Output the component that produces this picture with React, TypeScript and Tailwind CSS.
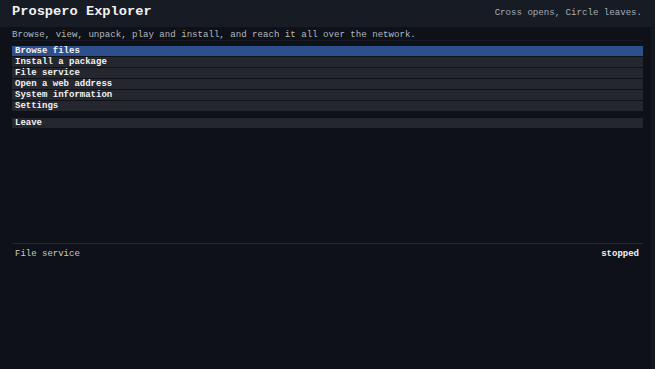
import React from 'react';

const items = [
  'Browse files',
  'Install a package',
  'File service',
  'Open a web address',
  'System information',
  'Settings',
];

function Row({ label, active }: { label: string; active?: boolean }) {
  return (
    <div
      className={`h-[10px] px-[3px] text-[9px] leading-[10px] font-bold text-[#f2f2f2] ${
        active ? 'bg-[#2e4f8e]' : 'bg-[#25272f]'
      }`}
    >
      {label}
    </div>
  );
}

export default function App() {
  return (
    <div
      className="flex flex-col h-screen w-full bg-[#0e1117] overflow-hidden"
      style={{ fontFamily: '"Liberation Mono", "DejaVu Sans Mono", monospace' }}
    >
      {/* header */}
      <header className="flex items-center justify-between h-[27px] pl-3 pr-[13px] bg-[#161b24] flex-shrink-0">
        <h1 className="text-[13.7px] font-bold text-[#f2f2f2] leading-none pb-[3px]">Prospero Explorer</h1>
        <span className="text-[9.1px] text-[#a9adb5] leading-none pb-px">Cross opens, Circle leaves.</span>
      </header>

      <div className="flex flex-1 min-h-0">
        <main className="flex-1 flex flex-col pl-3 pr-2">
          <p className="h-[13px] pt-px text-[9.1px] leading-[13px] text-[#b3b7bf]">
            Browse, view, unpack, play and install, and reach it all over the network.
          </p>

          <div className="h-[203px] pt-[5px] border-t border-[#161a22]">
            <div className="flex flex-col gap-px">
              {items.map((it, i) => (
                <Row key={it} label={it} active={i === 0} />
              ))}
            </div>
            <div className="mt-[7px]">
              <Row label="Leave" />
            </div>
          </div>

          {/* status */}
          <div className="border-t border-[#252932] flex items-center justify-between h-[18px] pl-[3px] pr-1 pt-[3px] text-[9px] leading-none">
            <span className="text-[#c6c9cf]">File service</span>
            <span className="font-bold text-[#f2f2f2]">stopped</span>
          </div>
        </main>
        <div className="w-[4px] bg-[#141821]" />
      </div>
    </div>
  );
}
